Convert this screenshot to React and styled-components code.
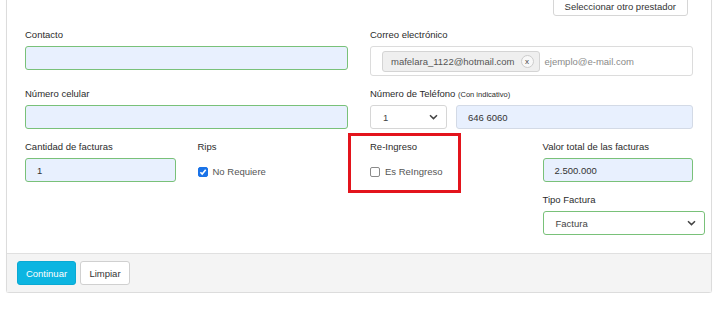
import React from 'react'
import styled, { createGlobalStyle } from 'styled-components'

const GlobalStyle = createGlobalStyle`
    body {
        margin:0;
        background:#fff;
        font-family:"Liberation Sans", Arial, sans-serif;
        font-size:9.5px;
        color:#333;
        overflow:hidden;
    }
`

function Chevron() {
    return (
        <svg width="9" height="6" viewBox="0 0 9 6">
            <path d="M1 1.2 L4.5 4.6 L8 1.2" fill="none" stroke="#444" strokeWidth="1.5" />
        </svg>
    )
}

function Check({ checked }) {
    return (
        <Box checked={checked}>
            {checked && (
                <svg width="8" height="8" viewBox="0 0 8 8">
                    <path d="M1.4 4.2 L3.2 6 L6.7 1.8" fill="none" stroke="#fff" strokeWidth="1.6" />
                </svg>
            )}
        </Box>
    )
}

function App() {
    return (
        <>
            <GlobalStyle />
            <Card>
                <Body>
                    <TopBar>
                        <GhostButton>Seleccionar otro prestador</GhostButton>
                    </TopBar>

                    <TwoCols>
                        <Field>
                            <Label>Contacto</Label>
                            <Input filled />
                        </Field>
                        <Field>
                            <Label>Correo electrónico</Label>
                            <TagBox>
                                <Tag>
                                    mafelara_1122@hotmail.com
                                    <TagClose>x</TagClose>
                                </Tag>
                                <Placeholder>ejemplo@e-mail.com</Placeholder>
                            </TagBox>
                        </Field>
                        <Field>
                            <Label>Número celular</Label>
                            <Input filled />
                        </Field>
                        <Field>
                            <Label>Número de Teléfono <Small>(Con indicativo)</Small></Label>
                            <PhoneRow>
                                <Select width="77px">
                                    <span>1</span>
                                    <Chevron />
                                </Select>
                                <Input filled plain grow>646 6060</Input>
                            </PhoneRow>
                        </Field>
                    </TwoCols>

                    <FourCols>
                        <Field>
                            <Label>Cantidad de facturas</Label>
                            <Input filled>1</Input>
                        </Field>
                        <Field>
                            <Label>Rips</Label>
                            <Option>
                                <Check checked />
                                No Requiere
                            </Option>
                        </Field>
                        <Field>
                            <Highlight />
                            <Label>Re-Ingreso</Label>
                            <Option>
                                <Check />
                                Es ReIngreso
                            </Option>
                        </Field>
                        <Stack>
                            <Field>
                                <Label>Valor total de las facturas</Label>
                                <Input filled>2.500.000</Input>
                            </Field>
                            <Field>
                                <Label>Tipo Factura</Label>
                                <Select width="162px" valid>
                                    <span>Factura</span>
                                    <Chevron />
                                </Select>
                            </Field>
                        </Stack>
                    </FourCols>
                </Body>
                <Footer>
                    <PrimaryButton>Continuar</PrimaryButton>
                    <DefaultButton>Limpiar</DefaultButton>
                </Footer>
            </Card>
        </>
    )
}

export default App

const Card = styled.div`
    margin:-6px 0 0 6px;
    width:706px;
    box-sizing:border-box;
    border:1px solid #dcdcdc;
    border-radius:3px;
    background:#fff;
    box-shadow:0 1px 1px rgba(0,0,0,0.06);
`

const Body = styled.div`
    padding:0 18px 18px;
`

const TopBar = styled.div`
    display:flex;
    justify-content:flex-end;
    padding-right:5px;
    margin-bottom:12px;
`

const GhostButton = styled.div`
    height:21px;
    box-sizing:border-box;
    padding:2px 11px 0;
    line-height:11px;
    display:flex;
    align-items:center;
    border:1px solid #d6d6d6;
    border-radius:3px;
    color:#333;
    background:#fff;
`

const TwoCols = styled.div`
    display:grid;
    grid-template-columns:323px 323px;
    column-gap:22px;
    row-gap:11px;
`

const FourCols = styled.div`
    margin-top:11px;
    display:grid;
    grid-template-columns:repeat(4, minmax(0, 1fr));
    column-gap:22px;
    align-items:start;
`

const Stack = styled.div`
    display:flex;
    flex-direction:column;
    gap:11px;
`

const Field = styled.div`
    position:relative;
    display:flex;
    flex-direction:column;
`

const Label = styled.div`
    height:14px;
    line-height:14px;
    margin-bottom:4px;
    color:#2b2b2b;
    white-space:nowrap;
`

const Small = styled.span`
    font-size:7.5px;
`

const Input = styled.div`
    height:24px;
    box-sizing:border-box;
    display:flex;
    align-items:center;
    padding:0 11px;
    border-radius:3px;
    background:${p => p.filled ? '#e8f0fe' : '#fff'};
    border:1px solid ${p => p.plain ? '#d3dae6' : '#79c179'};
    color:#333;
    ${p => p.grow && 'flex:1;'}
`

const TagBox = styled.div`
    height:30px;
    box-sizing:border-box;
    border:1px solid #dcdcdc;
    border-radius:3px;
    display:flex;
    align-items:center;
    padding-left:11px;
    gap:5px;
`

const Tag = styled.div`
    height:21px;
    box-sizing:border-box;
    display:flex;
    align-items:center;
    gap:6px;
    padding:0 5px 0 8px;
    background:#efefef;
    border:1px solid #d4d4d4;
    border-radius:3px;
    color:#555;
`

const TagClose = styled.span`
    width:13px;
    height:13px;
    box-sizing:border-box;
    border:1px solid #ccc;
    border-radius:50%;
    background:#f8f8f8;
    display:flex;
    align-items:center;
    justify-content:center;
    font-size:8px;
    color:#444;
`

const Placeholder = styled.span`
    color:#8a8a8a;
`

const PhoneRow = styled.div`
    display:flex;
    gap:9px;
`

const Select = styled.div`
    width:${p => p.width};
    flex:none;
    height:24px;
    box-sizing:border-box;
    display:flex;
    align-items:center;
    justify-content:space-between;
    padding:0 8px 0 12px;
    border:1px solid ${p => p.valid ? '#79c179' : '#d6d6d6'};
    border-radius:3px;
    background:#fff;
    color:#444;
`

const Option = styled.div`
    height:24px;
    padding-top:3px;
    box-sizing:border-box;
    display:flex;
    align-items:center;
    gap:5px;
    color:#555;
    white-space:nowrap;
`

const Box = styled.span`
    width:10px;
    height:10px;
    box-sizing:border-box;
    border-radius:2px;
    display:flex;
    align-items:center;
    justify-content:center;
    background:${p => p.checked ? '#1a73e8' : '#fff'};
    border:1px solid ${p => p.checked ? '#1a73e8' : '#8a8a8a'};
`

const Highlight = styled.div`
    position:absolute;
    left:-22px;
    top:-7px;
    width:113px;
    height:60px;
    box-sizing:border-box;
    border:3px solid #e3141c;
    pointer-events:none;
`

const Footer = styled.div`
    display:flex;
    gap:4px;
    padding:7px 10px 7px;
    background:#f4f4f4;
    border-top:1px solid #e0e0e0;
`

const PrimaryButton = styled.div`
    width:59px;
    height:24px;
    box-sizing:border-box;
    display:flex;
    align-items:center;
    justify-content:center;
    border-radius:3px;
    background:#0cb5e1;
    border:1px solid #0aa9d3;
    color:#fff;
`

const DefaultButton = styled(PrimaryButton)`
    width:50px;
    background:#fff;
    border:1px solid #d0d0d0;
    color:#333;
`
